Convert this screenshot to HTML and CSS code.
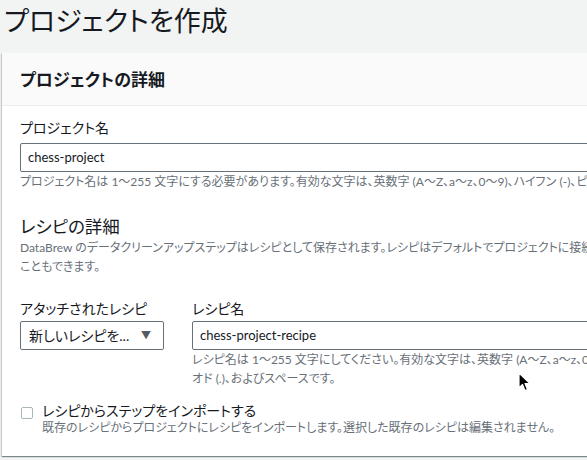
FILE: index.html
```html
<!DOCTYPE html>
<html lang="ja">
<head>
<meta charset="utf-8">
<title>プロジェクトを作成</title>
<link rel="stylesheet" href="styles.css">
</head>
<body>
<div class="page">
  <h1 class="title">プロジェクトを作成</h1>
  <section class="card">
    <header class="card-header">
      <h2>プロジェクトの詳細</h2>
    </header>
    <div class="card-body">
      <div class="field">
        <label class="label">プロジェクト名</label>
        <div class="input">chess-project</div>
        <p class="hint"><span class="line">プロジェクト名は 1～255 文字にする必要があります。有効な文字は、英数字 (A～Z、a～z、0～9)、ハイフン (-)、ピリオド (.)、およびスペースです。</span></p>
      </div>

      <h3 class="section-title">レシピの詳細</h3>
      <p class="desc"><span class="line">DataBrew のデータクリーンアップステップはレシピとして保存されます。レシピはデフォルトでプロジェクトに接続されますが、既存のレシピをインポートする</span><span class="line">こともできます。</span></p>

      <div class="row">
        <div class="field col-select">
          <label class="label">アタッチされたレシピ</label>
          <div class="select"><span>新しいレシピを...</span><span class="caret">▼</span></div>
        </div>
        <div class="field col-name">
          <label class="label">レシピ名</label>
          <div class="input">chess-project-recipe</div>
          <p class="hint"><span class="line">レシピ名は 1～255 文字にしてください。有効な文字は、英数字 (A～Z、a～z、0～9)、ハイフン (-)、アンダースコア (_)、ピリ</span><span class="line">オド (.)、およびスペースです。</span></p>
        </div>
      </div>

      <div class="check">
        <span class="box"></span>
        <div class="check-text">
          <div class="check-label">レシピからステップをインポートする</div>
          <div class="check-desc">既存のレシピからプロジェクトにレシピをインポートします。選択した既存のレシピは編集されません。</div>
        </div>
      </div>
    </div>
  </section>
</div>
<svg class="cursor" width="13" height="20" viewBox="0 0 13 20">
  <path d="M1 1 L1 16 L4.5 12.5 L7 18.5 L9.5 17.5 L7 11.5 L12 11.5 Z" fill="#000" stroke="#fff" stroke-width="1.2" stroke-linejoin="round"/>
</svg>
</body>
</html>
```

FILE: styles.css
```css
html, body {
  margin: 0;
  padding: 0;
}
body {
  width: 587px;
  height: 460px;
  overflow: hidden;
  background: #f2f3f3;
  font-family: Lato, "Noto Sans CJK JP", sans-serif;
  font-feature-settings: "palt";
  color: #16191f;
  position: relative;
}
.page {
  padding: 3px 0 0 2px;
  width: 900px;
}
.title {
  margin: 0 0 14px 2px;
  font-size: 27px;
  line-height: 36px;
  font-weight: 400;
  color: #16191f;
}
.card {
  background: #fff;
  width: 880px;
  box-shadow: 0 1px 1px 0 rgba(0,28,36,.3), 1px 1px 1px 0 rgba(0,28,36,.15), -1px 1px 1px 0 rgba(0,28,36,.15);
}
.card-header {
  background: #fafafa;
  border-bottom: 1px solid #eaeded;
  padding: 16px 18px 14px;
}
.card-header h2 {
  margin: 0;
  font-size: 17px;
  line-height: 22px;
  font-weight: 700;
}
.card-body {
  padding: 11px 18px 20px;
}
.field {
  display: flex;
  flex-direction: column;
}
.label {
  font-size: 14px;
  line-height: 22px;
  margin-bottom: 4px;
}
.input, .select {
  box-sizing: border-box;
  height: 29px;
  border: 1px solid #687078;
  border-radius: 2px;
  padding: 0 7px;
  font-size: 14px;
  line-height: 27px;
  white-space: nowrap;
}
.input {
  font-size: 13px;
  color: #16191f;
}
.hint {
  margin: 0;
  font-size: 12px;
  line-height: 19px;
  color: #687078;
}
.line {
  display: block;
  white-space: nowrap;
}
.section-title {
  margin: 25px 0 0;
  font-size: 17.5px;
  line-height: 22px;
  font-weight: 400;
}
.desc {
  margin: 0;
  font-size: 12px;
  line-height: 19px;
  color: #687078;
}
.row {
  display: flex;
  gap: 28px;
  margin-top: 22px;
}
.col-select {
  width: 144px;
  flex: none;
}
.col-name {
  flex: 1;
}
.col-select .label, .col-name .label {
  margin-bottom: 1px;
}
.select {
  display: flex;
  justify-content: space-between;
  align-items: center;
  color: #16191f;
  padding: 0 12px 0 8px;
}
.caret {
  font-size: 10px;
  color: #545b64;
}
.check {
  display: flex;
  align-items: flex-start;
  gap: 9px;
  margin-top: 14px;
}
.box {
  flex: none;
  box-sizing: border-box;
  width: 12px;
  height: 12px;
  border: 1px solid #aab7b8;
  border-radius: 2px;
  margin: 5px 0 0 1px;
}
.check-label {
  font-size: 14px;
  line-height: 18px;
}
.check-desc {
  font-size: 12px;
  line-height: 16px;
  color: #687078;
}
.cursor {
  position: absolute;
  left: 518px;
  top: 372px;
}
```
